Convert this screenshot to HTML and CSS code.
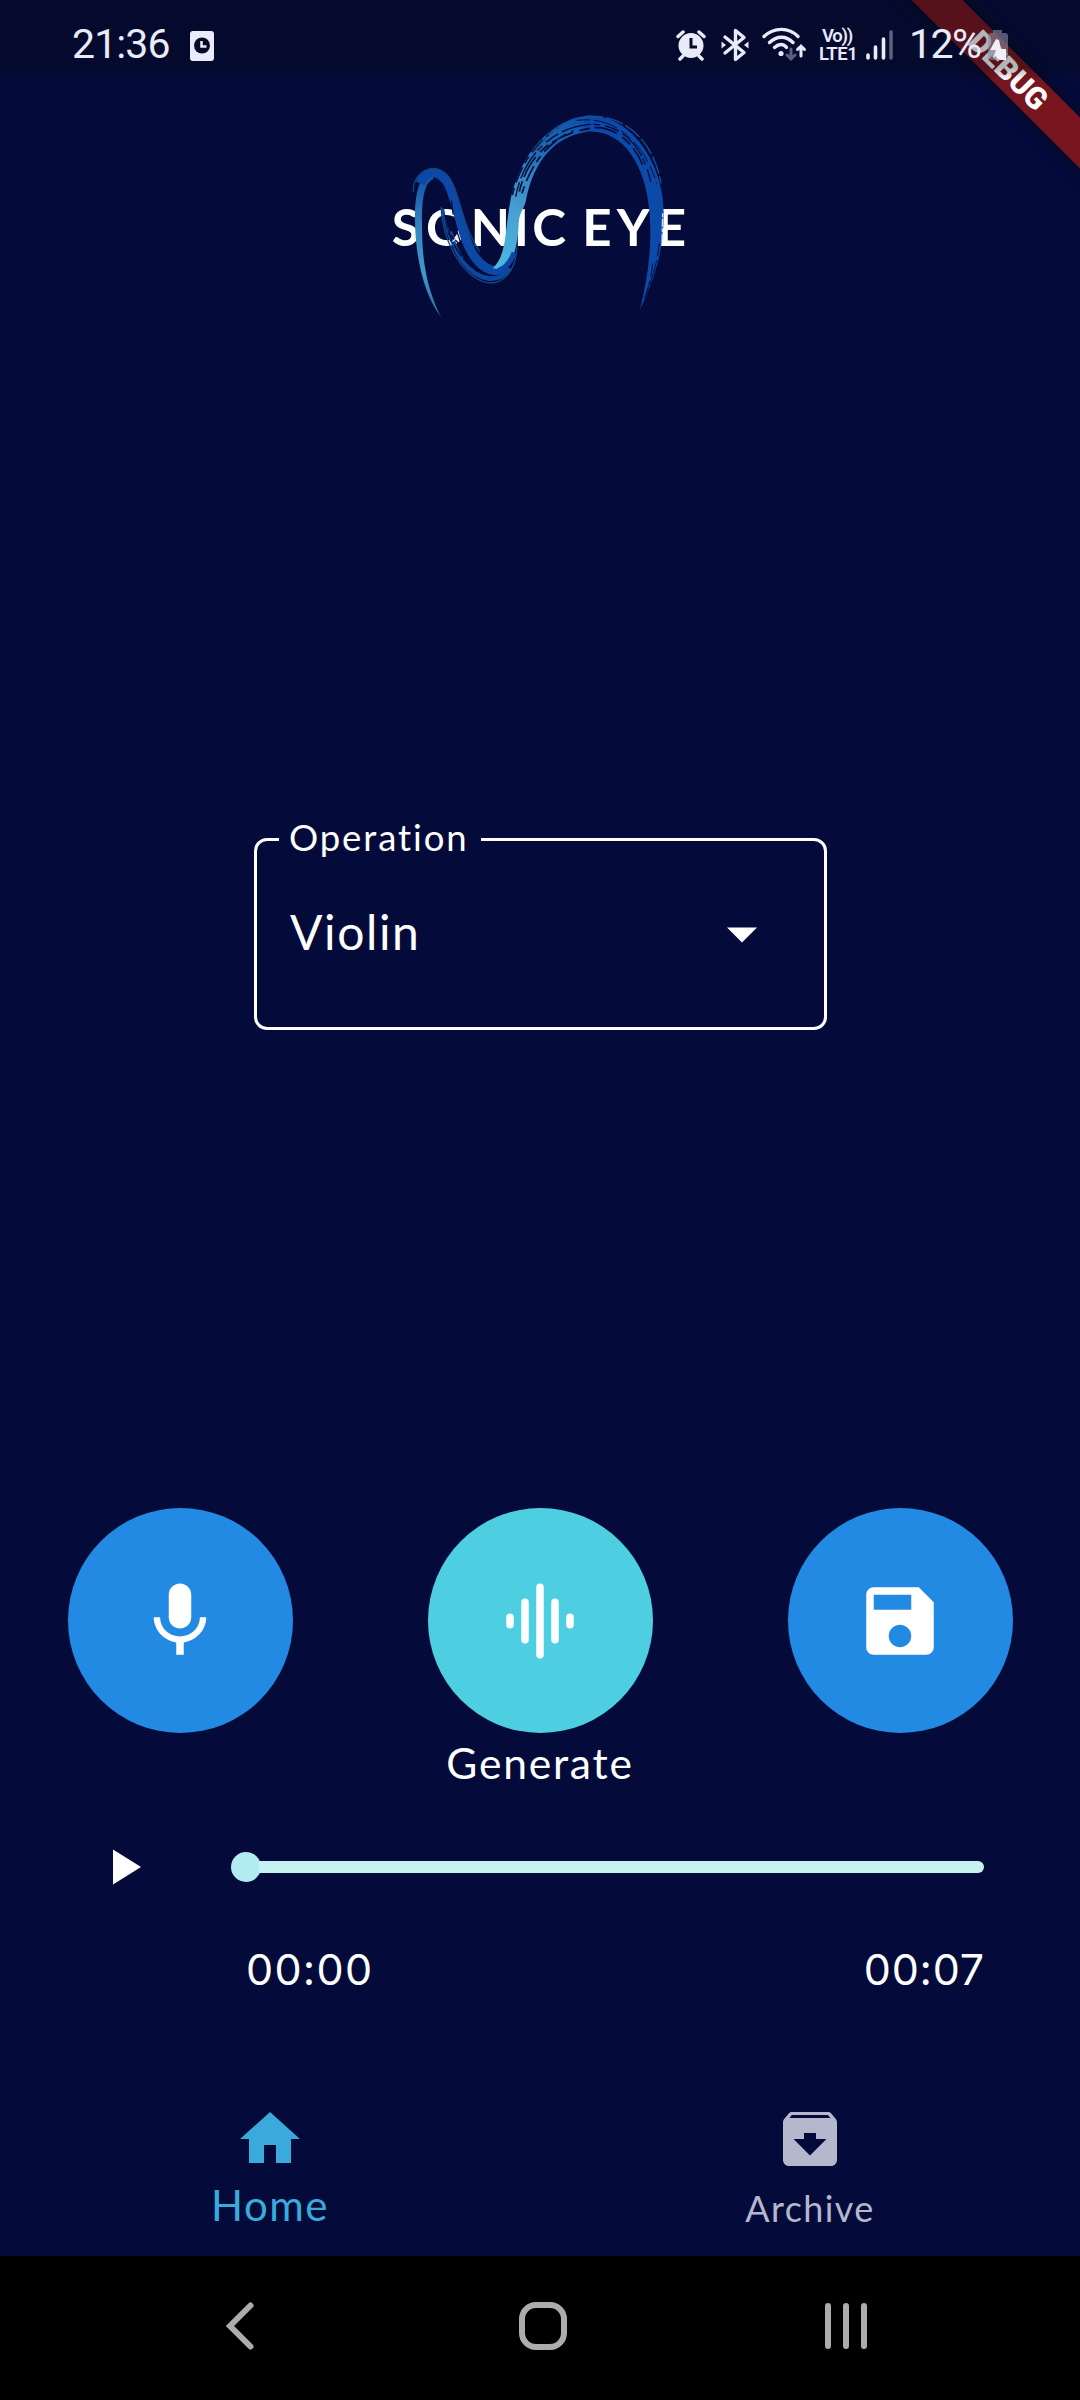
FILE: index.html
```html
<!DOCTYPE html>
<html lang="en">
<head>
<meta charset="utf-8">
<title>Sonic Eye</title>
<link rel="stylesheet" href="styles.css">
</head>
<body>
<div class="banner">DEBUG</div>
<header class="status">
  <span class="clock">21:36</span>
  <svg class="card-icon" width="26" height="32" viewBox="0 0 26 32"><rect x="1" y="1" width="24" height="30" rx="3" fill="#e9ebf8"/><circle cx="13" cy="15.500" r="8" fill="#060a2a"/><path d="M12.500 11v5.500h5" fill="none" stroke="#e9ebf8" stroke-width="2.500"/></svg>
  <div class="status-right">
    <svg width="30" height="32" viewBox="0 0 30 32"><circle cx="15" cy="16.500" r="12.500" fill="#e9ebf8"/><path d="M2 7.500 7 3M28 7.500 23 3M7 27l-3 3M23 27l3 3" stroke="#e9ebf8" stroke-width="3.500" stroke-linecap="round"/><path d="M15 9v9h6" fill="none" stroke="#060a2a" stroke-width="3"/></svg>
    <svg class="bt" width="28" height="34" viewBox="0 0 28 34"><path d="M4 9 23 24.500 14.500 31.500V2.500L23 9.500 4 25" fill="none" stroke="#e9ebf8" stroke-width="3.400" stroke-linejoin="round" stroke-linecap="round"/><path d="M0.500 13.500 5 17l-4.500 3.500zM27.500 13.500 23 17l4.500 3.500z" fill="#e9ebf8"/></svg>
    <svg class="wifi" width="46" height="36" viewBox="0 0 46 36"><g fill="none" stroke="#e9ebf8" stroke-width="3.300" stroke-linecap="round"><path d="M3 10.500C13 1 28 1 37 10.500M8.500 16.500C16 9.500 25 9.500 32 16.500M13.500 21.500c4.500-4 9-4 12 0"/><path d="M40 30V20m-3.500 3.500L40 20l3.500 3.500" stroke-width="3"/><path d="M30 23v10m-4-4 4 4 4-4" stroke="#5c5f7e" stroke-width="3"/></g><circle cx="20" cy="27.500" r="2.600" fill="#e9ebf8"/></svg>
    <div class="volte"><span>Vo))</span><span>LTE1</span></div>
    <svg class="signal" width="30" height="32" viewBox="0 0 30 32"><g stroke="#e9ebf8" stroke-width="3.600" stroke-linecap="round"><path d="M3 26v3M10.500 18v11M18.500 10v19"/><path d="M26 3v26" stroke="#5c5f7e"/></g></svg>
    <span class="percent">12%</span>
    <svg class="battery" width="22" height="34" viewBox="0 0 22 34"><path d="M6 1h9v3h3q3 0 3 3v21q0 3-3 3H4q-3 0-3-3V7q0-3 3-3h2z" fill="#8c8ea3" opacity=".6"/><path d="M9 10 3 21h6L6 29l3-2q1 4 5 4h5V20h-5l-2-9z" fill="#f1eef4"/></svg>
  </div>
</header>

<main class="app">
  <svg class="logo" width="340" height="230" viewBox="0 0 1020 690">
    <defs>
      <linearGradient id="tail" x1="0" y1="650" x2="0" y2="210" gradientUnits="userSpaceOnUse"><stop offset="0" stop-color="#246ca8"/><stop offset=".3" stop-color="#409acb"/><stop offset=".65" stop-color="#3181c0"/><stop offset="1" stop-color="#0e49a4"/></linearGradient>
      <linearGradient id="rise" x1="390" y1="510" x2="640" y2="60" gradientUnits="userSpaceOnUse"><stop offset="0" stop-color="#4cb9e0"/><stop offset=".35" stop-color="#479fd2"/><stop offset=".7" stop-color="#236eb5"/><stop offset="1" stop-color="#0e52ab"/></linearGradient>
    </defs>
    <text x="65 168 302 431 487 600 637 740 860" y="437" class="logo-text">SONIC EYE</text>
    <path d="M214 652C165 590 136 480 135 360C134 280 148 222 188 212L190 238C155 250 154 330 157 420C160 520 186 600 214 652Z" fill="url(#tail)"/>
    <path d="M150 250C175 195 225 215 245 275C268 340 280 420 310 465C340 510 375 520 400 503" fill="none" stroke="#0c48a6" stroke-width="28"/>
    <path d="M240 395C250 435 262 460 280 485C325 545 385 552 420 505" fill="none" stroke="#0c489f" stroke-width="14"/>
    <path d="M130 275C128 205 210 180 242 240C270 295 285 395 330 455M213 320C216 415 270 520 340 545C405 565 440 500 440 440" fill="none" stroke="#164583" stroke-width="4"/>
    <path d="M218 325C224 370 232 395 245 425" fill="none" stroke="#0c489f" stroke-width="9"/>
    <path d="M225 345C233 415 270 480 323 514M235 400 266 430M244 302C253 385 270 440 310 492" fill="none" stroke="#050b38" stroke-width="4" stroke-dasharray="42 5"/>
    <path d="M368 505C412 465 404 390 420 310C440 190 520 68 645 48L650 96C555 110 492 180 468 300C464 325 448 335 446 370C444 440 428 485 405 509Z" fill="url(#rise)"/>
    <path d="M645 48C780 35 880 190 881 335C882 435 862 520 810 628C835 530 847 430 838 330C825 190 755 80 640 96Z" fill="#0c4aaa"/>
    <path d="M385 512C402 506 420 492 432 458" fill="none" stroke="#0c48a6" stroke-width="15"/>
    <g fill="none" stroke="#050b38">
      <path d="M437 290C460 170 545 82 660 73C770 70 824 160 842 245" stroke-width="4" stroke-dasharray="45 12 90 8 20 15"/>
      <path d="M448 275C475 160 555 98 675 83C745 80 800 145 818 195" stroke-width="5" stroke-dasharray="32 14 70 20"/>
      <path d="M456 280C492 165 555 115 610 93M427 285C448 195 500 125 565 82" stroke-width="5" stroke-dasharray="22 17 50 14"/>
      <path d="M620 61C745 45 825 140 860 250M868 430C862 490 842 550 828 582M848 490C842 545 834 565 823 595" stroke-width="3" stroke-dasharray="40 11 75 13"/>
    </g>
    <path d="M494 154C555 70 620 40 690 50C790 62 855 145 873 250" fill="none" stroke="#174f95" stroke-width="4" stroke-dasharray="55 8"/>
    <path d="M878 340 876 432M247 425 264 411" fill="none" stroke="#d7e2f0" stroke-width="4" stroke-dasharray="12 4 24 5"/>
  </svg>

  <div class="select">
    <span class="select-label"><span>Operation</span></span>
    <span class="select-value">Violin</span>
    <svg width="30" height="16" viewBox="0 0 30 16"><path d="M0 0.500h30L15 15.500z" fill="#fff"/></svg>
  </div>

  <div class="actions">
    <div class="action"><button class="round"><svg width="90" height="90" viewBox="0 0 24 24"><path d="M12 14c1.660 0 3-1.340 3-3V5c0-1.660-1.340-3-3-3S9 3.340 9 5v6c0 1.660 1.340 3 3 3zm5.300-3c0 3-2.540 5.100-5.300 5.100S6.700 14 6.700 11H5c0 3.410 2.720 6.230 6 6.720V21h2v-3.280c3.280-.48 6-3.300 6-6.720h-1.700z"/></svg></button></div>
    <div class="action"><button class="round cyan"><svg width="90" height="90" viewBox="0 0 24 24"><path d="M4 11v2M8 7v10M12 3v18M16 7v10M20 11v2" stroke="#fff" stroke-width="2" stroke-linecap="round"/></svg></button><span class="action-label">Generate</span></div>
    <div class="action"><button class="round"><svg width="90" height="90" viewBox="0 0 24 24"><path d="M17 3H5c-1.110 0-2 .9-2 2v14c0 1.100.89 2 2 2h14c1.100 0 2-.9 2-2V7l-4-4zm-5 16c-1.660 0-3-1.340-3-3s1.340-3 3-3 3 1.340 3 3-1.340 3-3 3zm3-10H5V5h10v4z"/></svg></button></div>
  </div>

  <div class="player">
    <svg class="play" width="28" height="36" viewBox="0 0 28 36"><path d="M0 0.500 28 18 0 35.500z" fill="#fff"/></svg>
    <div class="slider"><i class="thumb"></i><i class="track"></i></div>
  </div>
  <div class="times"><span>00:00</span><span class="total">00:07</span></div>

  <nav class="tabs">
    <a class="tab active"><svg width="72" height="72" viewBox="0 0 24 24"><path d="M10 20v-6h4v6h5v-8h3L12 3 2 12h3v8z"/></svg><span>Home</span></a>
    <a class="tab"><svg width="72" height="72" viewBox="0 0 24 24"><path d="M20.540 5.230l-1.390-1.680C18.880 3.210 18.470 3 18 3H6c-.47 0-.88.21-1.160.55L3.460 5.230C3.170 5.570 3 6.020 3 6.500V19c0 1.100.9 2 2 2h14c1.100 0 2-.9 2-2V6.500c0-.48-.17-.93-.46-1.270zM12 17.500L6.500 12H10v-2h4v2h3.500L12 17.500zM5.120 5l.81-1h12l.94 1H5.120z"/></svg><span>Archive</span></a>
  </nav>
</main>

<footer class="system">
  <svg width="30" height="50" viewBox="0 0 30 50"><path d="M25.500 4.500 5 25l20.500 20.500" fill="none" stroke="#acacac" stroke-width="6" stroke-linecap="round"/></svg>
  <svg class="home-key" width="50" height="50" viewBox="0 0 50 50"><rect x="4" y="4" width="42" height="42" rx="14" fill="none" stroke="#acacac" stroke-width="6"/></svg>
  <svg width="44" height="50" viewBox="0 0 44 50"><path d="M4 5v40M22 5v40M40 5v40" stroke="#acacac" stroke-width="6" stroke-linecap="round"/></svg>
</footer>
</body>
</html>
```
FILE: styles.css
```css
* { box-sizing: border-box; }
html, body { margin: 0; }
body {
  position: relative;
  width: 1080px;
  height: 2400px;
  overflow: hidden;
  display: flex;
  flex-direction: column;
  background: #040b3a;
  color: #fff;
  font-family: Lato, "Open Sans", sans-serif;
}
svg { display: block; flex: none; }

.banner {
  position: absolute;
  left: 848px;
  top: 53px;
  width: 320px;
  height: 36px;
  transform: rotate(45deg);
  background: #79151f;
  box-shadow: 0 0 14px rgba(0, 0, 0, .5);
  font: 900 30.500px/36px Roboto, sans-serif;
  text-align: center;
}

.status {
  position: relative;
  height: 80px;
  flex: none;
  display: flex;
  align-items: flex-start;
  padding: 0 71px 0 72px;
  background: linear-gradient(rgba(6, 8, 16, .3) 0 68px, rgba(6, 8, 16, 0) 80px);
  color: #e9ebf8;
  font-family: Roboto, sans-serif;
}
.clock, .percent { font-size: 41px; line-height: 48px; margin-top: 20px; }
.clock { width: 117px; letter-spacing: -.9px; }
.card-icon { margin-top: 30px; }
.status-right { margin-left: auto; display: flex; align-items: flex-start; }
.status-right > svg { margin-top: 29px; }
.status-right > .bt { margin: 28px 0 0 15px; }
.status-right > .wifi { margin: 26px 0 0 12px; }
.volte { width: 40px; margin: 27px 0 0 12px; display: flex; flex-direction: column; font-size: 18.500px; line-height: 18px; font-weight: 600; white-space: nowrap; }
.volte span:first-child { padding-left: 3px; letter-spacing: -1.300px; }
.volte span:last-child { letter-spacing: -.5px; }
.status-right > .signal { margin-left: 6px; }
.percent { margin-left: 14px; width: 76px; letter-spacing: -1.500px; }
.status-right > .battery { margin-left: 2px; }

.app { flex: none; height: 2176px; display: flex; flex-direction: column; }
.logo { margin: 20px 0 0 370px; }
.logo-text { font: 700 153px Lato, sans-serif; fill: #fff; }

.select {
  width: 573px;
  height: 192px;
  margin: 508px 0 0 254px;
  border: 3px solid #fff;
  border-radius: 13px;
  display: grid;
  grid-template-columns: 1fr auto;
  grid-template-rows: 30px 1fr;
  padding: 0 67px 0 22px;
  flex: none;
}
.select-label { grid-column: 1 / 3; justify-self: start; width: 202px; height: 44px; margin-top: -26px; padding-left: 10px; background: #040b3a; font-size: 36.500px; line-height: 44px; letter-spacing: 1.900px; }
.select-value { margin-left: 11px; font-size: 48px; line-height: 56px; margin-top: 33px; letter-spacing: 1.600px; }
.select > svg { margin-top: 56px; }

.actions { display: flex; height: 300px; margin-top: 478px; flex: none; }
.action { width: 360px; display: flex; flex-direction: column; align-items: center; }
.round { width: 225px; height: 225px; border: 0; padding: 0; border-radius: 50%; background: #238ae4; display: flex; align-items: center; justify-content: center; fill: #fff; }
.cyan { background: #4ecee1; }
.action-label { font-size: 42.500px; line-height: 50px; margin-top: 5px; letter-spacing: 1.800px; }

.player { display: flex; align-items: center; height: 36px; margin: 41px 96px 0 113px; flex: none; }
.slider { display: flex; align-items: center; flex: 1; margin-left: 90px; }
.thumb { width: 30px; height: 30px; border-radius: 50%; background: #b2ebf2; }
.track { flex: 1; height: 12px; margin-left: -2px; border-radius: 0 6px 6px 0; background: #c6f2f2; }

.times { display: flex; justify-content: space-between; margin: 58px 95px 0 246px; font: 400 43px/52px Inter, sans-serif; letter-spacing: 1.300px; flex: none; }
.total { letter-spacing: .8px; }

.tabs { display: flex; margin-top: 108px; flex: none; }
.tab { width: 540px; display: flex; flex-direction: column; align-items: center; fill: #b5b7cc; color: #b5b7cc; font-size: 36px; line-height: 44px; letter-spacing: 1.400px; }
.tab span { margin-top: 11px; }
.tab.active { fill: #39aadb; color: #39aadb; font-size: 42px; line-height: 50px; }
.tab.active span { margin-top: 5px; letter-spacing: 1.500px; }

.system { height: 144px; flex: none; background: #000; display: flex; align-items: center; justify-content: space-between; padding: 0 212px 4px 225px; }
.home-key { margin-left: 6px; }
```
